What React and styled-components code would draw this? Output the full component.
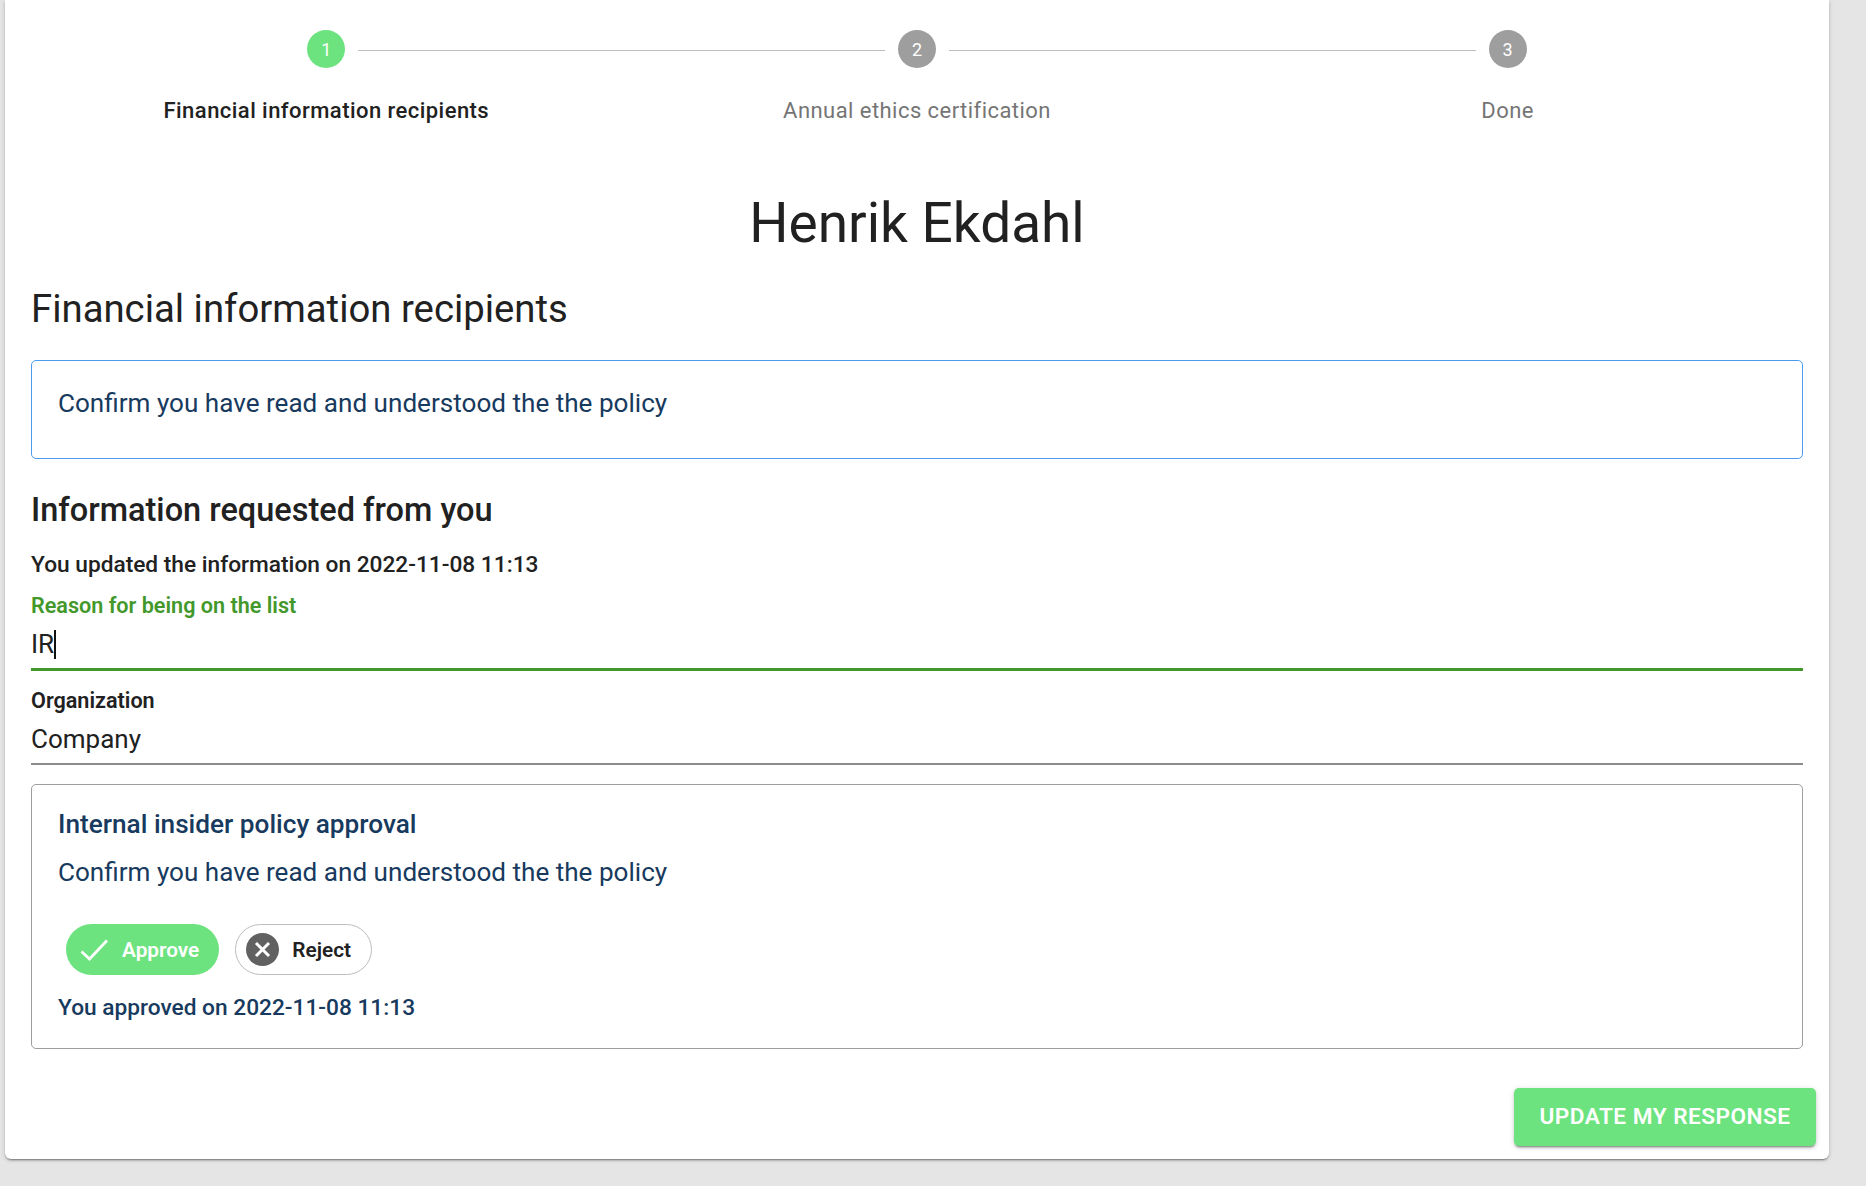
import React from "react";
import styled, { createGlobalStyle } from "styled-components";

const Global = createGlobalStyle`
  html, body { margin: 0; padding: 0; background: #e5e5e5; }
  body { font-family: Roboto, "Liberation Sans", sans-serif; color: #212121; }
`;
const Page = styled.div`
  height: 1186px;
  overflow: hidden;
  padding-left: 5px;
  box-sizing: border-box;
`;
const Paper = styled.main`
  box-sizing: border-box;
  width: 1824px;
  height: 1159px;
  background: #fff;
  border-radius: 0 0 6px 6px;
  box-shadow: 0 2px 2px -1px rgba(0,0,0,.42), 0 1px 4px rgba(0,0,0,.2);
  padding: 30px 13px 13px 26px;
  display: flex;
  flex-direction: column;
`;
const Stepper = styled.ol`
  list-style: none;
  margin: 0 13px 0 0;
  padding: 0;
  display: grid;
  grid-template-columns: repeat(3, 1fr);
`;
const Step = styled.li`
  position: relative;
  display: flex;
  flex-direction: column;
  align-items: center;
  &:not(:first-child)::before {
    content: "";
    position: absolute;
    top: 20px;
    left: calc(-50% + 32px);
    right: calc(50% + 32px);
    height: 1px;
    background: #bdbdbd;
  }
`;
const Dot = styled.span`
  width: 38px;
  height: 38px;
  border-radius: 50%;
  background: ${p => (p.$active ? "#6ce37e" : "#9e9e9e")};
  color: #fff;
  font-size: 18px;
  display: flex;
  align-items: center;
  justify-content: center;
`;
const StepLabel = styled.span`
  margin-top: 31px;
  font-size: 22px;
  line-height: 24px;
  letter-spacing: 0.45px;
  font-weight: ${p => (p.$active ? 500 : 400)};
  color: ${p => (p.$active ? "#212121" : "#757575")};
`;
const Title = styled.h1`
  margin: 66px 13px 0 0;
  font-size: 55px;
  line-height: 68px;
  font-weight: 400;
  text-align: center;
`;
const Heading = styled.h2`
  margin: 29px 0 0;
  font-size: 38.3px;
  line-height: 46px;
  font-weight: 400;
`;
const InfoBox = styled.section`
  box-sizing: border-box;
  margin: 28px 13px 0 0;
  height: 99px;
  border: 1px solid #4b9cf0;
  border-radius: 5px;
  padding: 26px;
  font-size: 26.1px;
  line-height: 32px;
  color: #173a5e;
`;
const Sub = styled.h3`
  margin: 33px 0 0;
  font-size: 32.5px;
  line-height: 36px;
  font-weight: 500;
`;
const Updated = styled.p`
  margin: 24px 0 0;
  font-size: 22.7px;
  line-height: 26px;
  font-weight: 500;
`;
const Field = styled.div`
  margin: ${p => p.$mt}px 13px 0 0;
  border-bottom: ${p => (p.$focus ? "3px solid #43982b" : "2px solid #8c8c8c")};
`;
const FieldLabel = styled.div`
  font-size: 21.6px;
  line-height: 24px;
  font-weight: 600;
  color: ${p => (p.$focus ? "#43982b" : "#212121")};
`;
const FieldValue = styled.div`
  margin-top: 8px;
  font-size: 26px;
  line-height: 36px;
  height: 42px;
  display: flex;
  align-items: flex-start;
`;
const Caret = styled.span`
  display: inline-block;
  width: 1.5px;
  height: 29px;
  margin-top: 4px;
  background: #111;
`;
const ApprovalBox = styled.section`
  box-sizing: border-box;
  margin: 19px 13px 0 0;
  height: 265px;
  border: 1px solid #9e9e9e;
  border-radius: 5px;
  padding: 23px 26px;
  color: #173a5e;
`;
const ApprovalTitle = styled.div`
  font-size: 26.2px;
  line-height: 32px;
  font-weight: 500;
`;
const ApprovalText = styled.div`
  margin-top: 16px;
  font-size: 26.1px;
  line-height: 32px;
`;
const Chips = styled.div`
  margin: 36px 0 0 8px;
  display: flex;
  gap: 16px;
`;
const Chip = styled.button`
  box-sizing: border-box;
  height: 51px;
  border-radius: 26px;
  font: 600 20.8px Roboto, sans-serif;
  display: flex;
  align-items: center;
  padding: ${p => (p.$on ? "0 20px 0 14px" : "0 20px 0 10px")};
  gap: 13px;
  border: ${p => (p.$on ? "none" : "1px solid #bdbdbd")};
  background: ${p => (p.$on ? "#6ce37e" : "#fff")};
  color: ${p => (p.$on ? "#fff" : "#212121")};
`;
const Approved = styled.p`
  margin: 20px 0 0;
  font-size: 22.7px;
  line-height: 26px;
  font-weight: 500;
`;
const Actions = styled.div`
  margin-top: 39px;
  display: flex;
  justify-content: flex-end;
`;
const Update = styled.button`
  width: 302px;
  height: 58px;
  border: none;
  border-radius: 5px;
  background: #6ce37e;
  color: #fff;
  font: 600 22.6px Roboto, sans-serif;
  letter-spacing: .5px;
  padding: 0 0 2px;
  box-shadow: 0 3px 2px -2px rgba(0,0,0,.35), 0 2px 3px rgba(0,0,0,.14), 0 1px 6px rgba(0,0,0,.12);
`;

const CheckIcon = () => (
  <svg width="29" height="22" viewBox="0 0 29 22" fill="none">
    <path d="M1.5 12.5 L9.5 20 L27 1.5" stroke="#fff" strokeWidth="2.8" />
  </svg>
);
const CancelIcon = () => (
  <svg width="33" height="33" viewBox="0 0 33 33">
    <circle cx="16.5" cy="16.5" r="16.5" fill="#616161" />
    <path d="M10 10 L23 23 M23 10 L10 23" stroke="#fff" strokeWidth="3" />
  </svg>
);

export default function App() {
  return (
    <Page>
      <Global />
      <Paper>
        <Stepper>
          <Step><Dot $active>1</Dot><StepLabel $active>Financial information recipients</StepLabel></Step>
          <Step><Dot>2</Dot><StepLabel>Annual ethics certification</StepLabel></Step>
          <Step><Dot>3</Dot><StepLabel>Done</StepLabel></Step>
        </Stepper>
        <Title>Henrik Ekdahl</Title>
        <Heading>Financial information recipients</Heading>
        <InfoBox>Confirm you have read and understood the the policy</InfoBox>
        <Sub>Information requested from you</Sub>
        <Updated>You updated the information on 2022-11-08 11:13</Updated>
        <Field $mt={16} $focus>
          <FieldLabel $focus>Reason for being on the list</FieldLabel>
          <FieldValue>IR<Caret /></FieldValue>
        </Field>
        <Field $mt={18}>
          <FieldLabel>Organization</FieldLabel>
          <FieldValue>Company</FieldValue>
        </Field>
        <ApprovalBox>
          <ApprovalTitle>Internal insider policy approval</ApprovalTitle>
          <ApprovalText>Confirm you have read and understood the the policy</ApprovalText>
          <Chips>
            <Chip $on><CheckIcon />Approve</Chip>
            <Chip><CancelIcon />Reject</Chip>
          </Chips>
          <Approved>You approved on 2022-11-08 11:13</Approved>
        </ApprovalBox>
        <Actions><Update>UPDATE MY RESPONSE</Update></Actions>
      </Paper>
    </Page>
  );
}
